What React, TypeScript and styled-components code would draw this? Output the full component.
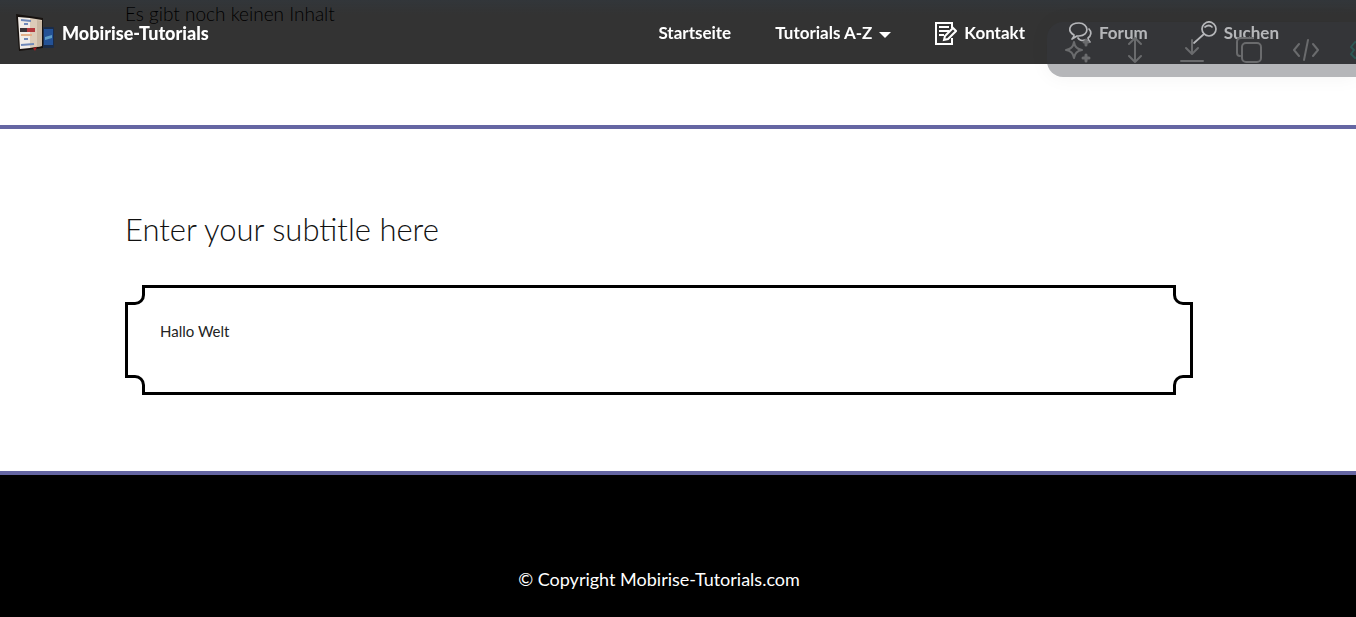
import React from "react";
import styled, { createGlobalStyle, css } from "styled-components";

const Global = createGlobalStyle`
  *, *::before, *::after { box-sizing: border-box; }
  body { margin: 0; background: #000; color: #232323; font-family: Lato, "Liberation Sans", sans-serif; overflow-x: hidden; }
`;

const Navbar = styled.header`
  position: fixed;
  top: 0;
  left: 0;
  right: 0;
  z-index: 2;
  height: 64px;
  padding: 0 77px 0 15px;
  display: flex;
  align-items: center;
  justify-content: space-between;
  background: linear-gradient(rgba(45, 70, 95, 0.16), transparent 14px), rgba(0, 0, 0, 0.8);
`;

const Brand = styled.a`
  display: flex;
  align-items: center;
  gap: 7px;
  color: #fff;
  font-size: 18px;
  font-weight: 900;
  line-height: 24px;
  text-decoration: none;
  padding-top: 2px;
`;

const Menu = styled.nav`
  display: flex;
  align-items: center;
  gap: 44px;
  padding-top: 2px;
`;

const MenuLink = styled.a`
  display: flex;
  align-items: center;
  gap: 7px;
  color: #fff;
  font-size: 17px;
  font-weight: 700;
  line-height: 24px;
  text-decoration: none;
  white-space: nowrap;
`;

const Caret = styled.span`
  border: 6px solid transparent;
  border-top-color: #fff;
  border-bottom: 0;
  margin-top: 3px;
`;

const Toolbar = styled.div`
  position: fixed;
  top: 22px;
  right: 0;
  z-index: 3;
  width: 309px;
  height: 55px;
  padding: 0 0 0 18px;
  display: flex;
  align-items: center;
  gap: 31px;
  overflow: hidden;
  border-radius: 16px 0 0 16px;
  background: rgba(55, 58, 66, 0.37);
  box-shadow: 0 0 20px rgba(0, 0, 0, 0.05);
`;

const Tool = styled.button<{ $tint?: string }>`
  flex: none;
  display: flex;
  width: 26px;
  height: 26px;
  padding: 0;
  border: 0;
  background: none;
  color: ${(p) => p.$tint ?? "#6a6b6d"};
`;

const Section = styled.section<{ $intro?: boolean }>`
  border-bottom: 4px solid #6566a3;
  background: #fff;
  padding: 80px 163px 76px 125px;
  ${(p) => p.$intro && css`
    height: 129px;
    padding-top: 0;
    padding-bottom: 0;
  `}
`;

const Empty = styled.p`
  margin: 0;
  color: #000;
  font-size: 19px;
  font-weight: 300;
  line-height: 28px;
`;

const Subtitle = styled.h2`
  margin: 0 0 36px;
  color: #111;
  font-size: 31px;
  font-weight: 300;
  line-height: 40px;
`;

const Frame = styled.div`
  position: relative;
  min-height: 110px;
  padding: 31px 32px;
  border: 3px solid #000;
`;

const Corner = styled.span<{ $v: "top" | "bottom"; $h: "left" | "right" }>`
  position: absolute;
  width: 20px;
  height: 20px;
  background: #fff;
  ${({ $v, $h }) => {
    const iv = $v === "top" ? "bottom" : "top";
    const ih = $h === "left" ? "right" : "left";
    return css`
      ${$v}: -3px;
      ${$h}: -3px;
      border-${iv}: 3px solid #000;
      border-${ih}: 3px solid #000;
      border-${iv}-${ih}-radius: 10px;
    `;
  }}
`;

const Text = styled.p`
  margin: 0;
  font-size: 15px;
  line-height: 24px;
`;

const Footer = styled.footer`
  padding: 89px 163px 23px 125px;
  background: #000;
  color: #fff;
  font-size: 18px;
  line-height: 30px;
  text-align: center;
`;

const line = { fill: "none", stroke: "currentColor", strokeLinecap: "round", strokeLinejoin: "round" } as const;

const Logo = () => (
  <svg width="40" height="40" viewBox="0 0 40 40" aria-hidden="true">
    <path d="M1 1 L28 5 V35 L4 38 Z" fill="#17120f" />
    <path d="M3 4 L15 5 V35 L5 36 Z" fill="#f1ece7" />
    <path d="M15 5 L27 7 V33 L15 35 Z" fill="#dccbb8" />
    <path d="M22 7 L27 8 V33 L22 34 Z" fill="#c9b7a2" />
    <path d="M6 7 L16 8 M9 11 H13 M9 26 H13 M6 32 L19 31" stroke="#6f88b8" strokeWidth="2" />
    <path d="M5 17 L12 17" stroke="#3a3338" strokeWidth="4" />
    <path d="M12 17 L20 17" stroke="#b3383c" strokeWidth="4" />
    <path d="M6 22 H17" stroke="#e3b08a" strokeWidth="2" />
    <rect x="28" y="14" width="11" height="21" rx="1" fill="#1b2c48" />
    <path d="M29 16 H38 V32 H29 Z" fill="#245296" />
    <path d="M30 24 L37 22 V25 L30 27 Z" fill="#5e9dc7" />
    <path d="M18 35 L22 34 L20 38 Z" fill="#9e1c20" />
  </svg>
);

const NoteIcon = () => (
  <svg width="22" height="23" viewBox="0 0 22 23" aria-hidden="true">
    <path d="M17 6 V1 H1 V22 H17 V16" fill="none" stroke="#fff" strokeWidth="2" />
    <path d="M4 5 H14 M4 9 H14 M4 13 H9" stroke="#fff" strokeWidth="2" />
    <path d="M9 18 L10 14 L18 6 L21 9 L13 17 Z" fill="#333" stroke="#fff" strokeWidth="2" />
  </svg>
);

const ForumIcon = () => (
  <svg width="23" height="22" viewBox="0 0 23 22" aria-hidden="true" {...line} strokeWidth="1.7">
    <path d="M5 13 C-2 9 0 1 10 1 C20 1 21 14 10 14 L8 14 L3 17 Q5 15 5 13 Z" />
    <path d="M20 7 C23 10 22 14 19 16 Q19 18 21 20 L16 18 C13 19 10 18 9 16" />
  </svg>
);

const SearchIcon = () => (
  <svg width="25" height="24" viewBox="0 0 25 24" aria-hidden="true" {...line} strokeWidth="1.7">
    <circle cx="17" cy="8" r="7" />
    <path d="M12 13 L2 22 M13 6 Q17 3 20 6" />
  </svg>
);

const tools: { name: string; tint?: string; draw: React.ReactNode }[] = [
  { name: "KI", draw: <><path d="M9 5 Q10 12 17 13 Q10 14 9 21 Q8 14 1 13 Q8 12 9 5Z" /><path d="M21 3 V8 M19 5 H23 M21 18 V24 M18 21 H24" strokeWidth="3" /></> },
  { name: "Verschieben", draw: <path d="M13 1 V25 M7 7 L13 1 L19 7 M7 19 L13 25 L19 19" /> },
  { name: "Speichern", draw: <path d="M13 3 V16 M7 11 L13 17 L19 11 M2 24 H24" /> },
  { name: "Kopieren", draw: <><rect x="6" y="6" width="19" height="19" rx="4" /><path d="M4 19 Q1 19 1 16 V5 Q1 1 5 1 H17" /></> },
  { name: "Code", draw: <path d="M6 7 L1 13 L6 19 M20 7 L25 13 L20 19 M15 3 L11 23" /> },
  { name: "Einstellungen", tint: "#2d5552", draw: <><circle cx="13" cy="13" r="4" /><path d="M10 2 H16 L17 6 L21 5 L24 10 L21 13 L24 17 L21 22 L17 20 L16 24 H10 L9 20 L5 21 L1 17 L4 13 L1 10 L5 5 L9 6 Z" /></> },
];

export default function App() {
  return (
    <>
      <Global />
      <Navbar>
        <Brand href="#"><Logo />Mobirise-Tutorials</Brand>
        <Menu>
          <MenuLink href="#">Startseite</MenuLink>
          <MenuLink href="#">Tutorials A-Z<Caret /></MenuLink>
          <MenuLink href="#"><NoteIcon />Kontakt</MenuLink>
          <MenuLink href="#"><ForumIcon />Forum</MenuLink>
          <MenuLink href="#"><SearchIcon />Suchen</MenuLink>
        </Menu>
      </Navbar>
      <Toolbar>
        {tools.map((t) => (
          <Tool key={t.name} type="button" aria-label={t.name} $tint={t.tint}>
            <svg width="26" height="26" viewBox="0 0 26 26" {...line} strokeWidth="2">{t.draw}</svg>
          </Tool>
        ))}
      </Toolbar>
      <main>
        <Section $intro><Empty>Es gibt noch keinen Inhalt</Empty></Section>
        <Section>
          <Subtitle>Enter your subtitle here</Subtitle>
          <Frame>
            <Corner $v="top" $h="left" />
            <Corner $v="top" $h="right" />
            <Corner $v="bottom" $h="left" />
            <Corner $v="bottom" $h="right" />
            <Text>Hallo Welt</Text>
          </Frame>
        </Section>
      </main>
      <Footer>© Copyright Mobirise-Tutorials.com</Footer>
    </>
  );
}
